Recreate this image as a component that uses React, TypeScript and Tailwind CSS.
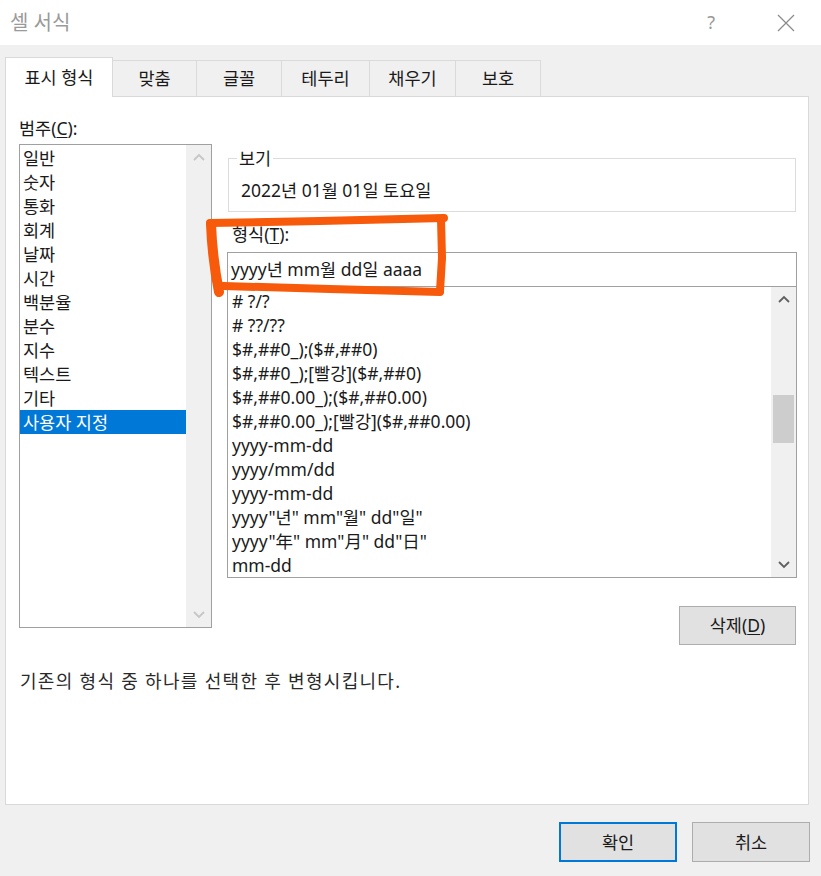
import React from "react";

const FONT = "font-['Noto_Sans','Noto_Sans_CJK_KR',sans-serif]";

const tabs = [
  { label: "표시 형식", w: "w-[108px]", active: true },
  { label: "맞춤", w: "w-[84px]" },
  { label: "글꼴", w: "w-[85px]" },
  { label: "테두리", w: "w-[88px]" },
  { label: "채우기", w: "w-[86px]" },
  { label: "보호", w: "w-[85px]" },
];

const categories = [
  "일반",
  "숫자",
  "통화",
  "회계",
  "날짜",
  "시간",
  "백분율",
  "분수",
  "지수",
  "텍스트",
  "기타",
  "사용자 지정",
];

const formats = [
  "# ?/?",
  "# ??/??",
  "$#,##0_);($#,##0)",
  "$#,##0_);[빨강]($#,##0)",
  "$#,##0.00_);($#,##0.00)",
  "$#,##0.00_);[빨강]($#,##0.00)",
  "yyyy-mm-dd",
  "yyyy/mm/dd",
  "yyyy-mm-dd",
  'yyyy"년" mm"월" dd"일"',
  'yyyy"年" mm"月" dd"日"',
  "mm-dd",
];

function Chevron({ up, color }: { up?: boolean; color: string }) {
  return (
    <svg width="12" height="8" viewBox="0 0 12 8">
      <polyline
        points={up ? "1,7 6,2 11,7" : "1,1 6,6 11,1"}
        fill="none"
        stroke={color}
        strokeWidth="1.8"
      />
    </svg>
  );
}

function Underlined({ before, key_, after }: { before: string; key_: string; after: string }) {
  return (
    <span>
      {before}
      <span className="underline underline-offset-2">{key_}</span>
      {after}
    </span>
  );
}

export default function App() {
  return (
    <div className={`relative flex h-[876px] w-[821px] flex-col bg-[#f0f0f0] text-[17.5px] text-[#1a1a1a] ${FONT}`}>
      {/* title bar */}
      <div className="flex h-[45px] shrink-0 items-center bg-white pl-[10px]">
        <span className="text-[20px] text-[#9a9a9a]">셀 서식</span>
        <span className="ml-auto mr-[62px] text-[18px] text-[#9a9a9a]">?</span>
        <svg width="18" height="18" viewBox="0 0 18 18" className="mr-[26px]">
          <path d="M1 1 L17 17 M17 1 L1 17" stroke="#8a8a8a" strokeWidth="1.2" />
        </svg>
      </div>

      {/* tabs */}
      <div className="mt-[12px] flex items-end pl-[5px]">
        {tabs.map((t) =>
          t.active ? (
            <div
              key={t.label}
              className={`${t.w} relative z-10 -mb-px flex h-[40px] items-center justify-center border border-b-0 border-[#d9d9d9] bg-white`}
            >
              {t.label}
            </div>
          ) : (
            <div
              key={t.label}
              className={`${t.w} flex h-[36px] items-center justify-center border border-l-0 border-b-0 border-[#dadada] bg-[#f0f0f0]`}
            >
              {t.label}
            </div>
          )
        )}
      </div>

      {/* panel */}
      <div className="mx-[5px] h-[709px] w-[804px] shrink-0 border border-[#d9d9d9] bg-white pl-[13px] pr-[11px]">
        <div className="mt-[20px] h-[22px] leading-[22px]">
          <Underlined before="범주(" key_="C" after="):" />
        </div>

        <div className="mt-[5px] flex">
          {/* category list */}
          <div className="flex h-[484px] w-[193px] shrink-0 border border-[#a0a0a0] bg-white">
            <div className="flex-1 pt-[1px]">
              {categories.map((c, i) => (
                <div
                  key={c}
                  className={`h-[24px] pl-[3px] leading-[24px] ${
                    i === categories.length - 1 ? "bg-[#0078d7] text-white" : ""
                  }`}
                >
                  {c}
                </div>
              ))}
            </div>
            <div className="flex w-[25px] flex-col items-center justify-between bg-[#f0f0f0] py-[8px]">
              <Chevron up color="#c6c6c6" />
              <Chevron color="#c6c6c6" />
            </div>
          </div>

          {/* right column */}
          <div className="ml-[15px] w-[570px] shrink-0">
            <fieldset className="mx-[1px] mt-[3px] border border-[#dcdcdc] px-[12px] pb-[10px] pt-[10px]">
              <legend className="ml-[-4px] px-[2px] leading-[22px]">보기</legend>
              <div className="leading-[22px]">2022년 01월 01일 토요일</div>
            </fieldset>

            <div className="mt-[11px] h-[22px] pl-[5px] leading-[22px]">
              <Underlined before="형식(" key_="T" after="):" />
            </div>

            <div className="mt-[7px] flex h-[35px] items-center border border-[#a0a0a0] px-[3px]">
              yyyy년 mm월 dd일 aaaa
            </div>

            <div className="flex h-[291px] border border-t-0 border-[#a0a0a0] bg-white">
              <div className="flex-1 overflow-hidden pl-[4px] pt-[2px]">
                {formats.map((f, i) => (
                  <div key={i} className="h-[24px] whitespace-nowrap leading-[24px]">
                    {f}
                  </div>
                ))}
              </div>
              <div className="flex w-[25px] flex-col items-center bg-[#f0f0f0] py-[8px]">
                <Chevron up color="#606060" />
                <div className="mt-[92px] h-[48px] w-[21px] bg-[#cdcdcd]" />
                <div className="mt-auto">
                  <Chevron color="#606060" />
                </div>
              </div>
            </div>

            <div className="mt-[28px] flex justify-end pr-[1px]">
              <button className="flex h-[39px] w-[117px] items-center justify-center border border-[#adadad] bg-[#e1e1e1]">
                <Underlined before="삭제(" key_="D" after=")" />
              </button>
            </div>
          </div>
        </div>

        <div className="mt-[25px] pl-[1px] text-[18px] leading-[22px] tracking-[1.3px] text-[#2a2a2a]">
          기존의 형식 중 하나를 선택한 후 변형시킵니다.
        </div>
      </div>

      {/* bottom buttons */}
      <div className="mt-[17px] flex justify-end gap-[15px] pr-[11px]">
        <button className="flex h-[40px] w-[118px] items-center justify-center border-2 border-[#0078d7] bg-[#e1e1e1]">
          확인
        </button>
        <button className="flex h-[40px] w-[118px] items-center justify-center border border-[#adadad] bg-[#e1e1e1]">
          취소
        </button>
      </div>

      {/* hand-drawn annotation */}
      <svg
        className="pointer-events-none absolute left-0 top-0"
        width="821"
        height="876"
        viewBox="0 0 821 876"
      >
        <g fill="none" stroke="#f75a0a" strokeWidth="8" strokeLinecap="round" strokeLinejoin="round">
          <path d="M210 223 L320 221 L444 218" />
          <path d="M441 219 L442 258 L440 291" />
          <path d="M223 286 L330 289 L440 292" />
          <path d="M211 224 C212 250 215 272 219 292" strokeWidth="10" />
        </g>
      </svg>
    </div>
  );
}
